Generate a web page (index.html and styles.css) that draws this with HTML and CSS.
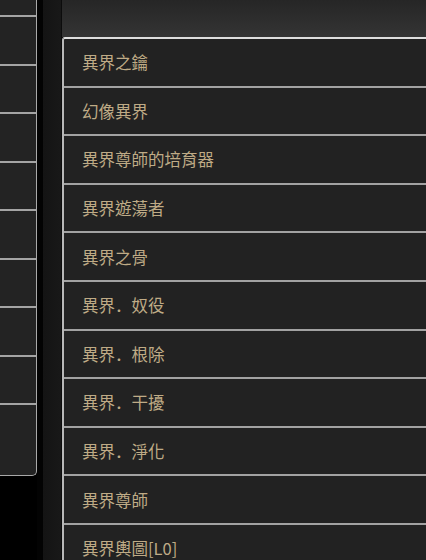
FILE: index.html
```html
<!DOCTYPE html>
<html lang="zh-Hant">
<head>
<meta charset="utf-8">
<title>異界</title>
<link rel="stylesheet" href="styles.css">
</head>
<body>
<div class="screen">
  <div class="side">
    <div class="side-row side-row-cut"></div>
    <div class="side-row"></div>
    <div class="side-row"></div>
    <div class="side-row"></div>
    <div class="side-row"></div>
    <div class="side-row"></div>
    <div class="side-row"></div>
    <div class="side-row"></div>
    <div class="side-row"></div>
    <div class="side-row side-row-last"></div>
  </div>
  <div class="gutter"></div>
  <div class="main">
    <div class="header"></div>
    <ul class="list">
      <li class="item">異界之鑰</li>
      <li class="item">幻像異界</li>
      <li class="item">異界尊師的培育器</li>
      <li class="item">異界遊蕩者</li>
      <li class="item">異界之骨</li>
      <li class="item">異界<span class="dot" lang="zh-Hans">．</span>奴役</li>
      <li class="item">異界<span class="dot" lang="zh-Hans">．</span>根除</li>
      <li class="item">異界<span class="dot" lang="zh-Hans">．</span>干擾</li>
      <li class="item">異界<span class="dot" lang="zh-Hans">．</span>淨化</li>
      <li class="item">異界尊師</li>
      <li class="item">異界輿圖[L0]</li>
    </ul>
  </div>
</div>
</body>
</html>
```
FILE: styles.css
```css
html, body {
  margin: 0;
  padding: 0;
  background: #000;
  overflow: hidden;
}
.screen {
  display: flex;
  align-items: flex-start;
  width: 426px;
  height: 560px;
  overflow: hidden;
  font-family: "Noto Sans CJK TC", "Noto Sans CJK SC", "Noto Sans", sans-serif;
}
.side {
  flex: 0 0 36px;
  width: 36px;
  background: #232323;
  border-right: 1px solid #a9a9a9;
  border-bottom: 1px solid #a9a9a9;
  border-bottom-right-radius: 5px;
  box-sizing: content-box;
}
.side-row {
  height: 46.5px;
  border-bottom: 2px solid #a4a4a4;
}
.side-row-cut {
  height: 15px;
}
.side-row-last {
  height: 70px;
  border-bottom: none;
}
.gutter {
  flex: 0 0 25px;
  height: 560px;
  background: linear-gradient(to right, #030303 0, #030303 6px, #141414 6px, #181818 24px, #0c0c0c 24px);
}
.main {
  flex: 1;
  min-width: 0;
  height: 560px;
}
.header {
  height: 37px;
  background: linear-gradient(to bottom, #262626, #343434);
}
.list {
  list-style: none;
  margin: 0;
  padding: 0;
  background: #222;
  border-top: 2px solid #dedede;
  border-left: 2px solid #b8b8b8;
  border-top-left-radius: 3px;
}
.item {
  height: 46.6px;
  box-sizing: content-box;
  display: flex;
  align-items: center;
  padding-left: 18px;
  border-bottom: 2px solid #a2a2a2;
  color: #bfab86;
  font-size: 16.5px;
  white-space: nowrap;
}
.dot {
  font-family: "Noto Sans CJK SC", "Noto Sans CJK TC", sans-serif;
}
```
